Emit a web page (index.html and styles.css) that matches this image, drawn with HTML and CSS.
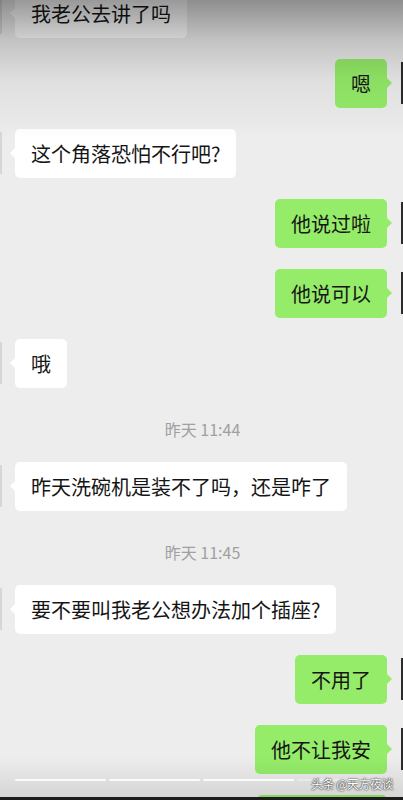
FILE: index.html
```html
<!DOCTYPE html>
<html lang="zh-CN">
<head>
  <meta charset="UTF-8" />
  <meta name="viewport" content="width=device-width, initial-scale=1.0"/>
  <title>聊天记录</title>
  <link rel="stylesheet" href="styles.css">
</head>
<body>

  <div class="screen">
    <div class="chat">
      <div class="msg recv"><span class="avatar"></span><div class="bubble">我老公去讲了吗</div></div>
      <div class="msg sent"><span class="avatar"></span><div class="bubble">嗯</div></div>
      <div class="msg recv"><span class="avatar"></span><div class="bubble">这个角落恐怕不行吧?</div></div>
      <div class="msg sent"><span class="avatar"></span><div class="bubble">他说过啦</div></div>
      <div class="msg sent"><span class="avatar"></span><div class="bubble">他说可以</div></div>
      <div class="msg recv"><span class="avatar"></span><div class="bubble">哦</div></div>
      <div class="time">昨天 11:44</div>
      <div class="msg recv"><span class="avatar"></span><div class="bubble">昨天洗碗机是装不了吗，还是咋了</div></div>
      <div class="time">昨天 11:45</div>
      <div class="msg recv"><span class="avatar"></span><div class="bubble">要不要叫我老公想办法加个插座?</div></div>
      <div class="msg sent"><span class="avatar"></span><div class="bubble">不用了</div></div>
      <div class="msg sent"><span class="avatar"></span><div class="bubble">他不让我安</div></div>
      <div class="msg sent"><span class="avatar"></span><div class="bubble peek"></div></div>
    </div>

    <div class="shade-top"></div>

    <div class="player">
      <div class="progress">
        <i></i><i></i><i></i><i class="dim"></i>
      </div>
      <span class="mark">头条 @天方夜谈</span>
    </div>
  </div>

</body>
</html>
```

FILE: styles.css
```css
body {
  margin: 0;
  background: #ededed;
  font-family: "Noto Sans CJK SC", "Noto Sans", sans-serif;
}
.screen {
  position: relative;
  width: 403px;
  height: 800px;
  overflow: hidden;
  background: #ededed;
}
.chat {
  display: flex;
  flex-direction: column;
  gap: 21px;
  margin-top: -11px;
}
.msg {
  display: flex;
  align-items: flex-start;
}
.msg.sent {
  flex-direction: row-reverse;
}
.avatar {
  flex: 0 0 2px;
  height: 42px;
  margin-top: 3px;
}
.recv .avatar {
  background: #d6d6d6;
  margin-right: 13px;
}
.sent .avatar {
  background: #2b2b2b;
  margin-left: 14px;
}
.bubble {
  position: relative;
  padding: 11px 16px;
  font-size: 20px;
  line-height: 27px;
  color: #151515;
  border-radius: 5px;
  white-space: nowrap;
}
.bubble.peek {
  width: 98px;
  height: 27px;
}
.recv .bubble {
  background: #fff;
}
.sent .bubble {
  background: #95ec69;
}
.bubble::before {
  content: "";
  position: absolute;
  top: 19px;
  border: 5px solid transparent;
}
.recv .bubble::before {
  left: -10px;
  border-right-color: #fff;
}
.sent .bubble::before {
  right: -10px;
  border-left-color: #95ec69;
}
.time {
  padding: 12px 0 4px;
  line-height: 16px;
  font-size: 16px;
  color: #a0a0a0;
  text-align: center;
  margin-left: 2px;
}
.shade-top {
  position: absolute;
  top: 0;
  left: 0;
  right: 0;
  height: 140px;
  background: linear-gradient(rgba(0,0,0,0.4), rgba(0,0,0,0.18) 40px, rgba(0,0,0,0.06) 80px, rgba(0,0,0,0));
  pointer-events: none;
}
.player {
  position: absolute;
  left: 0;
  right: 0;
  bottom: 0;
  height: 40px;
  background: linear-gradient(rgba(0,0,0,0), rgba(0,0,0,0.1));
  border-bottom: 3px solid #1c1c1c;
}
.progress {
  display: flex;
  gap: 3px;
  padding: 22px 15px 0;
}
.progress i {
  flex: 1;
  height: 2px;
  border-radius: 1px;
  background: rgba(255,255,255,0.9);
}
.progress i.dim {
  background: rgba(255,255,255,0.35);
}
.mark {
  position: absolute;
  right: 10px;
  bottom: 6px;
  font-size: 12px;
  line-height: 14px;
  letter-spacing: -0.5px;
  color: #fff;
  text-shadow: 0 0 2px #333, 0 0 1px #000;
}
```
